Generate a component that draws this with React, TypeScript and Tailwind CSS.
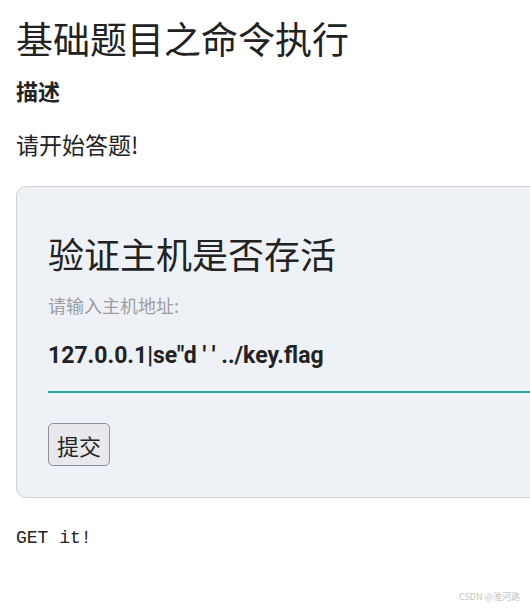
export default function App() {
  return (
    <div
      className="relative h-[610px] w-[530px] overflow-hidden bg-white px-4 text-[#222]"
      style={{ fontFamily: '"Noto Sans CJK SC", "Noto Sans", sans-serif' }}
    >
      <h1 className="pt-[16px] text-[37px] leading-[44px] font-normal">基础题目之命令执行</h1>
      <h4 className="mt-[16px] text-[22px] leading-[28px] font-bold">描述</h4>
      <p className="mt-[25px] text-[23px] leading-[30px]">请开始答题!</p>

      <div className="mt-[27px] w-[600px] rounded-[10px] border border-[#d2d2d2] bg-[#eef1f6] px-[31px] pt-[44px] pb-[31px]">
        <h2 className="text-[36px] leading-[44px] font-normal">验证主机是否存活</h2>
        <label className="mt-[18px] block text-[18px] leading-[24px] text-[#9e9e9e]">请输入主机地址:</label>
        <div className="mt-[24px] border-b-2 border-[#26a69a] pb-[20px]">
          <span
            className="text-[23px] leading-[30px] font-bold text-[#222]"
            style={{ fontFamily: "Roboto, sans-serif" }}
          >
            127.0.0.1|se"d ' ' ../key.flag
          </span>
        </div>
        <button className="mt-[30px] h-[43px] w-[62px] rounded-[5px] border border-[#8f8f9d] bg-[#e9e9ed] text-[22px] leading-[30px] text-[#222]">
          提交
        </button>
      </div>

      <pre
        className="mt-[28px] text-[18px] leading-[24px] text-[#222]"
        style={{ fontFamily: '"Liberation Mono", monospace' }}
      >
        GET it!
      </pre>

      <span className="absolute right-[10px] bottom-[7px] text-[9px] leading-[12px] text-[#c4c4c4]">
        CSDN @淮河路
      </span>
    </div>
  );
}
